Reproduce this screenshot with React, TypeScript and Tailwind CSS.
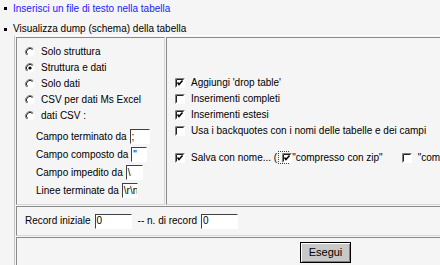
import React from "react";

function Radio({ checked = false }: { checked?: boolean }) {
  return (
    <svg width="10" height="10" viewBox="0 0 10 10" className="shrink-0">
      <circle cx="5" cy="5" r="4.5" fill="#ffffff" />
      <path d="M8.2 1.8 A4.5 4.5 0 0 0 1.8 8.2" fill="none" stroke="#808080" strokeWidth="1" />
      <path d="M7.5 2.5 A3.5 3.5 0 0 0 2.5 7.5" fill="none" stroke="#202020" strokeWidth="1" />
      {checked && <circle cx="5" cy="5" r="1.6" fill="#000000" />}
    </svg>
  );
}

function Check({ checked = false }: { checked?: boolean }) {
  return (
    <svg width="10" height="10" viewBox="0 0 10 10" className="shrink-0">
      <rect x="0" y="0" width="10" height="10" fill="#ffffff" />
      <path d="M0.5 9.5 V0.5 H9.5" fill="none" stroke="#808080" />
      <path d="M1.5 8.5 V1.5 H8.5" fill="none" stroke="#202020" />
      {checked && <path d="M2.5 4.5 L4 6.5 L7.5 2.5" fill="none" stroke="#000000" strokeWidth="1.6" />}
    </svg>
  );
}

function Field({ value, w }: { value: string; w: string }) {
  return (
    <span
      className={`inline-flex items-center h-[15px] ${w} bg-white border-t border-l border-t-[#404040] border-l-[#404040] border-b border-r border-b-white border-r-white pl-[1px] overflow-hidden whitespace-nowrap leading-none`}
    >
      {value}
    </span>
  );
}

export default function App() {
  const radios = [
    { label: "Solo struttura", checked: false },
    { label: "Struttura e dati", checked: true },
    { label: "Solo dati", checked: false },
    { label: "CSV per dati Ms Excel", checked: false },
    { label: "dati CSV :", checked: false },
  ];
  const csv = [
    { label: "Campo terminato da", value: ";", w: "w-[20px]" },
    { label: "Campo composto da", value: "\"", w: "w-[16px]" },
    { label: "Campo impedito da", value: "\\", w: "w-[17px]" },
    { label: "Linee terminate da", value: "\\r\\n", w: "w-[16px]" },
  ];

  return (
    <div className="w-[440px] h-[265px] overflow-hidden bg-[#f5f5f5] text-black text-[10px] leading-[12px] font-['Liberation_Sans',Arial,sans-serif]">
      <div className="flex items-center h-[16px] pt-[1px]">
        <span className="ml-[4px] w-[3px] h-[3px] bg-black" />
        <a className="ml-[6px] text-[#1a1aff]">Inserisci un file di testo nella tabella</a>
      </div>
      <div className="flex items-center h-[12px] mt-[7px]">
        <span className="ml-[4px] w-[3px] h-[3px] bg-black" />
        <span className="ml-[6px]">Visualizza dump (schema) della tabella</span>
      </div>

      <div className="ml-[14px] w-[620px] border border-t-white border-l-[#c8c8c8] border-b-[#808080] border-r-[#808080] p-[1px] grid grid-cols-[149px_1fr] gap-[1px]">
        {/* left column: export type */}
        <div className="h-[168px] border border-t-[#8a8a8a] border-l-[#8a8a8a] border-b-[#d8d8d8] border-r-[#d8d8d8] flex flex-col justify-center pl-[8px]">
          {radios.map((r) => (
            <div key={r.label} className="flex items-center h-[16px] gap-[6px]">
              <Radio checked={r.checked} />
              <span>{r.label}</span>
            </div>
          ))}
          <div className="mt-[5px] pl-[11px] flex flex-col gap-[2px]">
            {csv.map((c) => (
              <div key={c.label} className="flex items-center h-[16px] gap-[3px]">
                <span>{c.label}</span>
                <Field value={c.value} w={c.w} />
              </div>
            ))}
          </div>
        </div>

        {/* right column: options */}
        <div className="h-[168px] border border-t-[#8a8a8a] border-l-[#8a8a8a] border-b-[#d8d8d8] border-r-[#d8d8d8] flex flex-col justify-center pl-[8px]">
          <div className="flex items-center h-[16px] gap-[6px]"><Check checked /><span>Aggiungi 'drop table'</span></div>
          <div className="flex items-center h-[16px] gap-[6px]"><Check /><span>Inserimenti completi</span></div>
          <div className="flex items-center h-[16px] gap-[6px]"><Check checked /><span>Inserimenti estesi</span></div>
          <div className="flex items-center h-[16px] gap-[6px]"><Check /><span>Usa i backquotes con i nomi delle tabelle e dei campi</span></div>
          <div className="flex items-center h-[20px] mt-[9px] whitespace-nowrap">
            <Check checked />
            <span className="ml-[6px]">Salva con nome... (</span>
            <span className="ml-[1px] relative w-[11px] h-[13px] outline outline-1 outline-dotted outline-[#404040] -outline-offset-1">
              <span className="absolute left-[4px] top-[2px]"><Check checked /></span>
            </span>
            <span className="ml-[3px]">"compresso con zip"</span>
            <span className="ml-[19px]"><Check /></span>
            <span className="ml-[6px]">"compresso con gzip" )</span>
          </div>
        </div>

        {/* start record row */}
        <div className="col-span-2 h-[30px] border border-t-[#8a8a8a] border-l-[#8a8a8a] border-b-[#d8d8d8] border-r-[#d8d8d8] flex items-center pl-[8px]">
          <span>Record iniziale</span>
          <span className="ml-[4px]"><Field value="0" w="w-[37px]" /></span>
          <span className="ml-[6px]">-- n. di record</span>
          <span className="ml-[4px]"><Field value="0" w="w-[37px]" /></span>
        </div>

        {/* submit row */}
        <div className="col-span-2 h-[32px] border border-t-[#8a8a8a] border-l-[#8a8a8a] border-b-[#d8d8d8] border-r-[#d8d8d8] flex justify-center pt-[4px]">
          <button className="h-[21px] w-[51px] ml-[3px] bg-[#c8c8c8] border border-black shadow-[inset_1px_1px_0_#ffffff,inset_-1px_-1px_0_#808080] text-[11px] leading-none font-['Liberation_Sans',Arial,sans-serif]">
            Esegui
          </button>
        </div>
      </div>
    </div>
  );
}
